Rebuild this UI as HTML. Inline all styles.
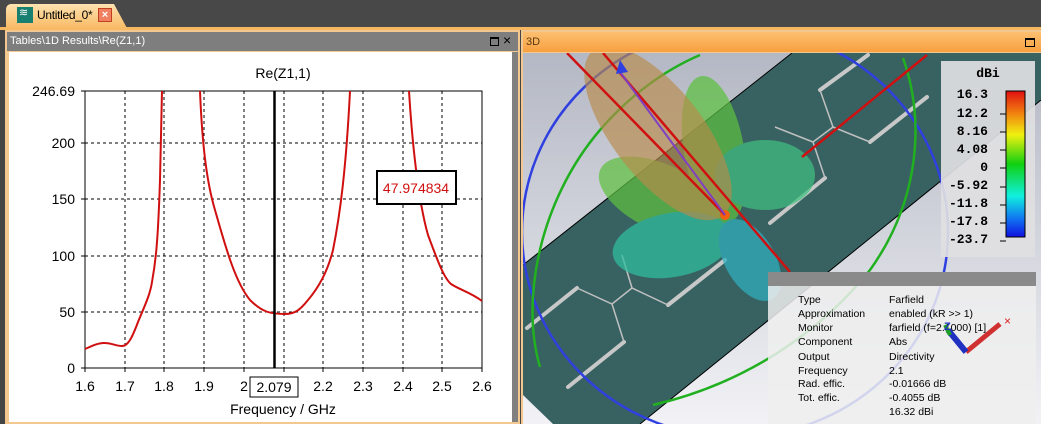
<!DOCTYPE html>
<html><head><meta charset="utf-8"><style>
*{margin:0;padding:0;box-sizing:border-box}
body{width:1041px;height:424px;overflow:hidden;background:#454545;font-family:"Liberation Sans",sans-serif;position:relative}
.abs{position:absolute}
</style></head><body>
<div class="abs" style="left:0;top:0;width:1041px;height:29px;background:#484848"></div>
<div class="abs" style="left:0;top:27px;width:1041px;height:3px;background:#f5b860"></div>
<!-- tab -->
<div class="abs" style="left:6px;top:4px;width:122px;height:26px;background:linear-gradient(#fde2b0,#f8b860);border-radius:5px 10px 0 0;clip-path:polygon(0 0,108px 0,122px 26px,0 26px)"></div>
<div class="abs" style="left:17px;top:7px;width:16px;height:16px;background:#188070"></div>
<div class="abs" style="left:19px;top:6px;color:#fff;font-size:11px">≋</div>
<div class="abs" style="left:37px;top:8px;font-size:12px;color:#000;letter-spacing:-0.3px">Untitled_0*</div>
<div class="abs" style="left:98px;top:8px;width:14px;height:14px;background:#f08060;border:1px solid #c04020;color:#fff;font-size:11px;line-height:12px;text-align:center;font-weight:bold">×</div>
<!-- left panel -->
<div class="abs" style="left:5px;top:30px;width:515px;height:394px;background:#f3c890"></div>
<div class="abs" style="left:7px;top:32px;width:511px;height:19px;background:#7e7e7e"></div>
<div class="abs" style="left:10px;top:35px;font-size:11px;color:#fff">Tables\1D Results\Re(Z1,1)</div>
<div class="abs" style="left:490px;top:37px;width:9px;height:9px;border:1.5px solid #000;border-top-width:2.5px"></div>
<div class="abs" style="left:503px;top:32px;font-size:14px;color:#000">×</div>
<div class="abs" style="left:9px;top:52px;width:503px;height:370px;background:#fff"></div>
<div class="abs" style="left:512px;top:52px;width:6px;height:370px;background:#808080"></div>
<svg class="abs" style="left:0;top:0" width="520" height="424">
<g font-family="Liberation Sans,sans-serif" font-size="14" fill="#000">
<text x="283" y="78" text-anchor="middle">Re(Z1,1)</text>
<text x="75" y="96" text-anchor="end">246.69</text>
<text x="75" y="148" text-anchor="end">200</text>
<text x="75" y="204" text-anchor="end">150</text>
<text x="75" y="261" text-anchor="end">100</text>
<text x="75" y="317" text-anchor="end">50</text>
<text x="75" y="373" text-anchor="end">0</text>
<g text-anchor="middle">
<text x="85" y="391">1.6</text><text x="125" y="391">1.7</text><text x="164" y="391">1.8</text><text x="204" y="391">1.9</text><text x="244" y="391">2</text><text x="323" y="391">2.2</text><text x="363" y="391">2.3</text><text x="403" y="391">2.4</text><text x="442" y="391">2.5</text><text x="482" y="391">2.6</text>
<text x="283" y="414">Frequency / GHz</text>
</g></g>
<g stroke="#000" stroke-dasharray="3,3" stroke-width="1">
<path d="M125 91V368M164 91V368M204 91V368M244 91V368M284 91V368M323 91V368M363 91V368M403 91V368M442 91V368"/>
<path d="M85 143H482M85 199H482M85 256H482M85 312H482"/>
</g>
<rect x="85" y="91" width="397" height="277" fill="none" stroke="#000"/>
<path d="M85 368v4M125 368v4M164 368v4M204 368v4M244 368v4M284 368v4M323 368v4M363 368v4M403 368v4M442 368v4M482 368v4M81 91h4M81 143h4M81 199h4M81 256h4M81 312h4M81 368h4" stroke="#000"/>
<path d="M85 349 C92 346,98 343,104 343 C112 343,116 346,122 346 C128 346,132 338,138 322 C145 305,150 295,152 282 C156 260,158 240,160 180 L162 91" fill="none" stroke="#d01010" stroke-width="2"/>
<path d="M200 91 C202 140,206 180,215 210 C225 245,235 282,250 300 C262 312,270 314,285 314 C295 314,300 310,308 300 C320 286,328 270,333 250 C340 215,346 170,350 91" fill="none" stroke="#d01010" stroke-width="2"/>
<path d="M409 91 C412 140,418 200,428 235 C438 262,444 278,451 284 C460 290,470 292,482 301" fill="none" stroke="#d01010" stroke-width="2"/>
<path d="M274.5 91V368" stroke="#000" stroke-width="2.5"/>
<rect x="250" y="377" width="48" height="20" fill="#fff" stroke="#000"/>
<text x="274" y="392" text-anchor="middle" font-size="14" font-family="Liberation Sans,sans-serif">2.079</text>
<rect x="377" y="171" width="79" height="33" fill="#fff" stroke="#000" stroke-width="2"/>
<text x="416" y="193" text-anchor="middle" font-size="14" fill="#d01010" font-family="Liberation Sans,sans-serif">47.974834</text>
</svg>
<!-- right panel -->
<div class="abs" style="left:521px;top:30px;width:520px;height:394px;background:#f3c890"></div>
<div class="abs" style="left:523px;top:32px;width:518px;height:20px;background:linear-gradient(#fdc070,#f8a040)"></div>
<div class="abs" style="left:526px;top:36px;font-size:11px;color:#5a3a10">3D</div>
<div class="abs" style="left:1025px;top:38px;width:10px;height:9px;border:1.5px solid #000;border-top-width:2.5px"></div>
<svg class="abs" style="left:523px;top:53px" width="518" height="371" viewBox="523 53 518 371">
<defs><linearGradient id="bg" x1="0" y1="0" x2="0" y2="1"><stop offset="0" stop-color="#b4b8c4"/><stop offset="1" stop-color="#f2f2f6"/></linearGradient></defs>
<rect x="523" y="53" width="518" height="371" fill="url(#bg)"/>
<polygon points="523,265 792,53 1041,53 1041,100 640,424 553,424 523,395" fill="#386262"/>
<path d="M523,265 L792,53 M1041,100 L640,424" stroke="#000" stroke-width="1"/>
<g stroke="#c8c8c8" stroke-width="4" stroke-linecap="round" fill="none">
<path d="M820 90L868 55M870 142L927 97M770 223L825 178M527 328L577 288M568 387L624 342M668 305L725 260"/>
</g>
<g stroke="#c0c0c0" stroke-width="1.5" fill="none">
<path d="M820 90L833 127L870 142M833 127L813 142L825 178M813 142L775 127M577 288L612 304L632 288L668 305M612 304L624 342M632 288L622 255"/>
</g>
<ellipse cx="735" cy="232" rx="213" ry="205" fill="none" stroke="#3040e0" stroke-width="2.5"/>
<path d="M540 367 C520 300,540 200,600 130 C630 95,665 70,700 55" fill="none" stroke="#20b020" stroke-width="2.5"/>
<path d="M903 58 C925 120,920 200,870 270 C830 320,760 380,653 405" fill="none" stroke="#20b020" stroke-width="2.5"/>
<g opacity="0.72">
<ellipse cx="714" cy="150" rx="75" ry="30" transform="rotate(80 714 150)" fill="#5cc040"/>
<ellipse cx="765" cy="175" rx="50" ry="35" fill="#40c080"/>
<ellipse cx="662" cy="198" rx="68" ry="33" transform="rotate(25 662 198)" fill="#60c040"/>
<ellipse cx="672" cy="245" rx="60" ry="32" transform="rotate(-10 672 245)" fill="#30c0a0"/>
<ellipse cx="750" cy="260" rx="45" ry="25" transform="rotate(60 750 260)" fill="#30b0c0"/>
</g>
<ellipse cx="658" cy="133" rx="105" ry="45" transform="rotate(52 658 133)" fill="#b88a48" opacity="0.65"/>
<circle cx="725" cy="215" r="5" fill="#f06010"/>
<path d="M603 53L790 272M567 53L725 215M802 157L927 55" stroke="#d01010" stroke-width="2.5"/>
<path d="M725 215L620 72" stroke="#8040c0" stroke-width="2"/>
<path d="M620 60l8 12-12 2z" fill="#3040e0"/>
<!-- legend -->
<rect x="941" y="61" width="94" height="196" fill="#dfe0e2" opacity="0.92"/>
<text x="988" y="77" text-anchor="middle" font-family="Liberation Mono,monospace" font-weight="bold" font-size="13">dBi</text>
<defs><linearGradient id="cb" x1="0" y1="0" x2="0" y2="1"><stop offset="0" stop-color="#e01010"/><stop offset="0.15" stop-color="#f08010"/><stop offset="0.3" stop-color="#f0f010"/><stop offset="0.5" stop-color="#10d010"/><stop offset="0.72" stop-color="#10f0e0"/><stop offset="0.88" stop-color="#1070f0"/><stop offset="1" stop-color="#1010e0"/></linearGradient></defs>
<rect x="1006" y="91" width="19" height="146" fill="url(#cb)" stroke="#000"/>
<g font-family="Liberation Mono,monospace" font-weight="bold" font-size="13" text-anchor="end">
<text x="988" y="98">16.3</text><text x="988" y="117">12.2</text><text x="988" y="135">8.16</text><text x="988" y="153">4.08</text><text x="988" y="171">0</text><text x="988" y="189">-5.92</text><text x="988" y="207">-11.8</text><text x="988" y="225">-17.8</text><text x="988" y="243">-23.7</text>
</g>
<path d="M1000 114h6M1000 132h6M1000 150h6M1000 168h6M1000 187h6M1000 205h6M1000 223h6M1000 241h6" stroke="#000"/>
<!-- info panel -->
<rect x="768" y="272" width="268" height="152" fill="#eeeeee" opacity="0.85"/>
<rect x="768" y="272" width="268" height="14" fill="#8a8a8a"/>
<g font-family="Liberation Sans,sans-serif" font-size="10.5" fill="#000">
<text x="798" y="303">Type</text><text x="889" y="303">Farfield</text>
<text x="798" y="317">Approximation</text><text x="889" y="317">enabled (kR &gt;&gt; 1)</text>
<text x="798" y="331">Monitor</text><text x="889" y="331">farfield (f=2.1000) [1]</text>
<text x="798" y="345">Component</text><text x="889" y="345">Abs</text>
<text x="798" y="360">Output</text><text x="889" y="360">Directivity</text>
<text x="798" y="374">Frequency</text><text x="889" y="374">2.1</text>
<text x="798" y="387">Rad. effic.</text><text x="889" y="387">-0.01666 dB</text>
<text x="798" y="401">Tot. effic.</text><text x="889" y="401">-0.4055 dB</text>
<text x="889" y="415">16.32 dBi</text>
</g>
<path d="M966 352L1000 324" stroke="#d03030" stroke-width="5"/>
<path d="M966 352L948 330" stroke="#2030c0" stroke-width="6"/>
<path d="M950 335L945 325" stroke="#20a020" stroke-width="4"/>
<text x="1004" y="325" fill="#e02020" font-size="12" font-family="Liberation Sans,sans-serif">×</text>
<text x="944" y="330" fill="#2030c0" font-size="11" font-weight="bold" font-family="Liberation Sans,sans-serif">Z</text>
</svg>
</body></html>
